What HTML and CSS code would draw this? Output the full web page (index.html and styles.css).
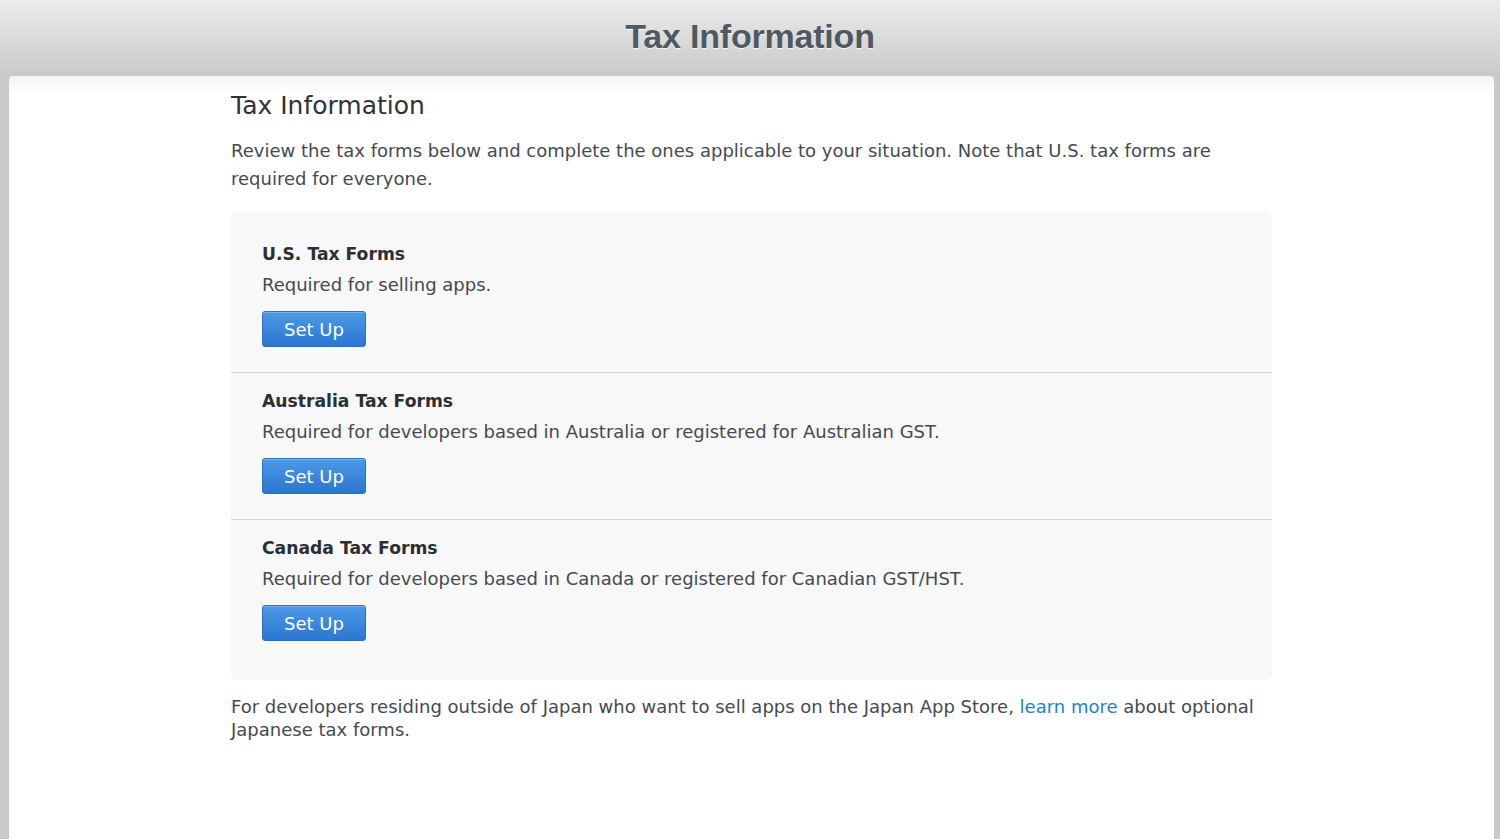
FILE: index.html
```html
<!DOCTYPE html>
<html lang="en">
<head>
<meta charset="utf-8">
<title>Tax Information</title>
<link rel="stylesheet" href="styles.css">
</head>
<body>
<header class="topbar">
  <h1 class="topbar-title">Tax Information</h1>
</header>
<main class="panel">
  <div class="content">
    <h2 class="page-title">Tax Information</h2>
    <p class="intro">Review the tax forms below and complete the ones applicable to your situation. Note that U.S. tax forms are required for everyone.</p>
    <div class="forms">
      <section class="form-row">
        <h3 class="form-title">U.S. Tax Forms</h3>
        <p class="form-desc">Required for selling apps.</p>
        <button class="btn" type="button">Set Up</button>
      </section>
      <section class="form-row">
        <h3 class="form-title">Australia Tax Forms</h3>
        <p class="form-desc">Required for developers based in Australia or registered for Australian GST.</p>
        <button class="btn" type="button">Set Up</button>
      </section>
      <section class="form-row">
        <h3 class="form-title">Canada Tax Forms</h3>
        <p class="form-desc">Required for developers based in Canada or registered for Canadian GST/HST.</p>
        <button class="btn" type="button">Set Up</button>
      </section>
    </div>
    <p class="footnote">For developers residing outside of Japan who want to sell apps on the Japan App Store, <a href="#" class="link">learn more</a> about optional Japanese tax forms.</p>
  </div>
</main>
</body>
</html>
```
FILE: styles.css
```css
* { box-sizing: border-box; }
html, body { height: 100%; }
body {
  margin: 0;
  background: #c9c9c9;
  font-family: "DejaVu Sans", Verdana, sans-serif;
  color: #444a52;
  display: flex;
  flex-direction: column;
  overflow: hidden;
}
.topbar {
  height: 76px;
  flex: none;
  background: linear-gradient(#ececec, #c9c9c9);
  display: flex;
  justify-content: center;
  align-items: flex-start;
}
.topbar-title {
  margin: 16px 0 0;
  font-family: "Liberation Sans", Arial, sans-serif;
  font-weight: bold;
  font-size: 34px;
  line-height: 40px;
  color: #4f5963;
  text-shadow: 0 1px 0 rgba(255,255,255,0.8);
  letter-spacing: -0.2px;
}
.panel {
  flex: 1;
  margin: 0 6px 0 9px;
  background: linear-gradient(#f4f4f4, #ffffff 18px);
  border-radius: 4px 4px 0 0;
}
.content {
  margin-left: 222px;
  width: 1041px;
  padding-top: 14px;
}
.page-title {
  margin: 0;
  font-weight: normal;
  font-size: 25px;
  line-height: 32px;
  color: #2f3338;
}
.intro {
  margin: 15px 0 0;
  font-size: 18px;
  line-height: 28px;
  color: #444a52;
}
.forms {
  margin-top: 19px;
  background: #f8f8f8;
  border-radius: 6px;
  padding: 14px 0;
}
.form-row {
  padding: 17px 31px 25px;
  border-top: 1px solid #d6d6d6;
}
.form-row:first-child { border-top: 0; }
.form-title {
  margin: 0;
  font-size: 17.2px;
  line-height: 22px;
  font-weight: bold;
  color: #2b2f33;
}
.form-desc {
  margin: 9px 0 0;
  font-size: 18px;
  line-height: 22px;
  color: #444a52;
}
.btn {
  display: block;
  margin-top: 15px;
  width: 104px;
  height: 36px;
  border: 1px solid #2a6fc2;
  border-radius: 3px;
  background: linear-gradient(#4c9ae6, #2c76d0);
  color: #ffffff;
  font-family: "DejaVu Sans", Verdana, sans-serif;
  font-size: 18px;
  padding: 0;
  box-shadow: inset 0 1px 0 rgba(255,255,255,0.25);
}
.footnote {
  margin: 15px 0 0;
  font-size: 18px;
  line-height: 23px;
  color: #444a52;
}
.link {
  color: #1f80d0;
  text-decoration: none;
}
```
